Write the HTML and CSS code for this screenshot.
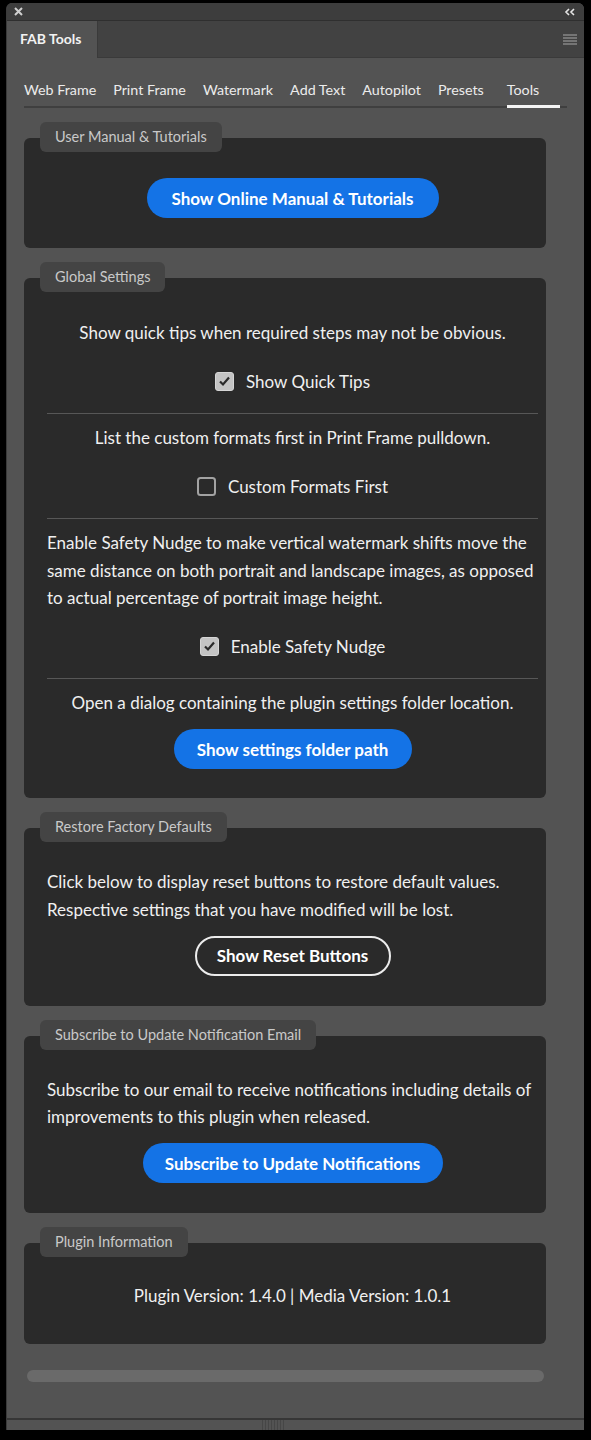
FILE: index.html
```html
<!DOCTYPE html>
<html>
<head>
<meta charset="utf-8">
<link rel="stylesheet" href="styles.css">
</head>
<body>
<div class="panel">
  <div class="titlebar">
    <svg class="close" width="9" height="9" viewBox="0 0 9 9"><path d="M1 1L8 8M8 1L1 8" stroke="#d0d0d0" stroke-width="2"/></svg>
    <svg class="collapse" width="11" height="8" viewBox="0 0 11 8"><path d="M5 1L2 4L5 7M10 1L7 4L10 7" stroke="#e6e6e6" stroke-width="1.6" fill="none"/></svg>
  </div>
  <div class="tabbar">
    <div class="paneltab">FAB Tools</div>
    <svg class="menu" width="14" height="11" viewBox="0 0 14 11"><path d="M0 1H14M0 4H14M0 7H14M0 10H14" stroke="#a8a8a8" stroke-width="1.2"/></svg>
  </div>
  <div class="content">
    <nav class="tabs">
      <span class="tab">Web Frame</span>
      <span class="tab">Print Frame</span>
      <span class="tab">Watermark</span>
      <span class="tab">Add Text</span>
      <span class="tab">Autopilot</span>
      <span class="tab">Presets</span>
      <span class="tab active">Tools</span>
    </nav>

    <section class="card">
      <div class="legend">User Manual &amp; Tutorials</div>
      <div class="center"><button class="btn blue w1">Show Online Manual &amp; Tutorials</button></div>
    </section>

    <section class="card settings">
      <div class="legend">Global Settings</div>
      <p class="txt center">Show quick tips when required steps may not be obvious.</p>
      <div class="check"><svg class="box" width="19" height="19" viewBox="0 0 19 19"><rect x="0.5" y="0.5" width="18" height="18" rx="2.5" fill="#c4c4c4" stroke="#d6d6d6"/><path d="M5 9.5L8 12.5L14 5.5" stroke="#2a2a2a" stroke-width="2.2" fill="none"/></svg><span>Show Quick Tips</span></div>
      <hr class="sep">
      <p class="txt center">List the custom formats first in Print Frame pulldown.</p>
      <div class="check"><svg class="box" width="19" height="19" viewBox="0 0 19 19"><rect x="1" y="1" width="17" height="17" rx="2.5" fill="none" stroke="#a2a2a2" stroke-width="2"/></svg><span>Custom Formats First</span></div>
      <hr class="sep">
      <p class="txt">Enable Safety Nudge to make vertical watermark shifts move the same distance on both portrait and landscape images, as opposed to actual percentage of portrait image height.</p>
      <div class="check"><svg class="box" width="19" height="19" viewBox="0 0 19 19"><rect x="0.5" y="0.5" width="18" height="18" rx="2.5" fill="#c4c4c4" stroke="#d6d6d6"/><path d="M5 9.5L8 12.5L14 5.5" stroke="#2a2a2a" stroke-width="2.2" fill="none"/></svg><span>Enable Safety Nudge</span></div>
      <hr class="sep">
      <p class="txt center">Open a dialog containing the plugin settings folder location.</p>
      <div class="center btnrow"><button class="btn blue w2">Show settings folder path</button></div>
    </section>

    <section class="card">
      <div class="legend">Restore Factory Defaults</div>
      <p class="txt">Click below to display reset buttons to restore default values. Respective settings that you have modified will be lost.</p>
      <div class="center btnrow"><button class="btn outline w3">Show Reset Buttons</button></div>
    </section>

    <section class="card">
      <div class="legend">Subscribe to Update Notification Email</div>
      <p class="txt">Subscribe to our email to receive notifications including details of improvements to this plugin when released.</p>
      <div class="center btnrow"><button class="btn blue w4">Subscribe to Update Notifications</button></div>
    </section>

    <section class="card last">
      <div class="legend">Plugin Information</div>
      <p class="txt center">Plugin Version: 1.4.0 | Media Version: 1.0.1</p>
    </section>

    <div class="hscroll"></div>
  </div>
  <div class="footer"><span class="grip"></span></div>
</div>
</body>
</html>
```

FILE: styles.css
```css
* { box-sizing: border-box; }
body {
  margin: 0;
  background: #000;
  font-family: "Lato", "Liberation Sans", sans-serif;
  color: #f0f0f0;
}
.panel {
  margin: 3px 0 0 6px;
  width: 578px;
  height: 1427px;
  background: #535353;
  border-radius: 6px 6px 0 0;
  overflow: hidden;
  display: flex;
  flex-direction: column;
  border-left: 1px solid #3a3a3a;
}
.titlebar {
  height: 18px;
  flex-shrink: 0;
  background: #3d3d3d;
  border-bottom: 1px solid #2f2f2f;
  display: flex;
  align-items: center;
  justify-content: space-between;
  padding: 0 9px 0 7px;
}
.tabbar {
  height: 37px;
  flex-shrink: 0;
  background: #424242;
  display: flex;
  align-items: center;
  justify-content: space-between;
  border-bottom: 1px solid #3a3a3a;
  padding-right: 7px;
}
.paneltab {
  width: 91px;
  height: 37px;
  line-height: 36px;
  background: #535353;
  color: #f2f2f2;
  font-weight: bold;
  font-size: 14px;
  padding-left: 13px;
  border-right: 1px solid #3a3a3a;
}
.content {
  flex: 1;
  padding: 22px 17px 0 17px;
}
.tabs {
  display: flex;
  gap: 17px;
  border-bottom: 2px solid #3f3f3f;
  font-size: 14.3px;
}
.tab {
  flex-shrink: 0;
  white-space: nowrap;
  line-height: 20px;
  padding-bottom: 6px;
  color: #ececec;
}
.tab.active {
  width: 53px;
  margin-left: 6px;
  box-shadow: inset 0 -3px 0 #f4f4f4;
  margin-bottom: -2px;
  padding-bottom: 8px;
}
.card {
  position: relative;
  width: 522px;
  background: #2a2a2a;
  border-radius: 6px;
  padding: 40px 8px 30px 23px;
  margin-top: 30px;
}
.card.settings { padding-top: 41px; padding-bottom: 29px; }
.card.last { padding-bottom: 34px; padding-top: 39px; }
.legend {
  position: absolute;
  top: -16px;
  left: 16px;
  height: 30px;
  line-height: 30px;
  padding: 0 15px;
  background: #444;
  border-radius: 6px;
  color: #c9c9c9;
  font-size: 14.5px;
}
.center { text-align: center; }
.txt {
  margin: 0;
  font-size: 17px;
  line-height: 27.5px;
  color: #f0f0f0;
}
.check {
  margin-top: 21px;
  height: 27px;
  display: flex;
  align-items: center;
  justify-content: center;
  gap: 12px;
  font-size: 17px;
}
.box { display: block; }
.sep {
  margin: 18.5px 0 10px 0;
  border: 0;
  height: 1px;
  background: #575757;
}
.btnrow { margin-top: 12.5px; }
.btn {
  height: 40px;
  border-radius: 20px;
  font-family: inherit;
  font-weight: bold;
  font-size: 17px;
  color: #fff;
  padding: 0;
  cursor: pointer;
}
.blue { background: #1473e6; border: 0; }
.outline { background: transparent; border: 2px solid #ececec; }
.w1 { width: 292px; }
.w2 { width: 238px; }
.w3 { width: 196px; }
.w4 { width: 300px; }
.hscroll {
  margin: 26px 0 0 3px;
  width: 517px;
  height: 12px;
  border-radius: 6px;
  background: #6a6a6a;
}
.footer {
  height: 12px;
  flex-shrink: 0;
  border-top: 2px solid #363636;
  display: flex;
  justify-content: center;
}
.grip {
  margin-left: -46px;
  width: 22px;
  height: 10px;
  background: repeating-linear-gradient(90deg, #464646 0 1px, transparent 1px 3px);
}
```
